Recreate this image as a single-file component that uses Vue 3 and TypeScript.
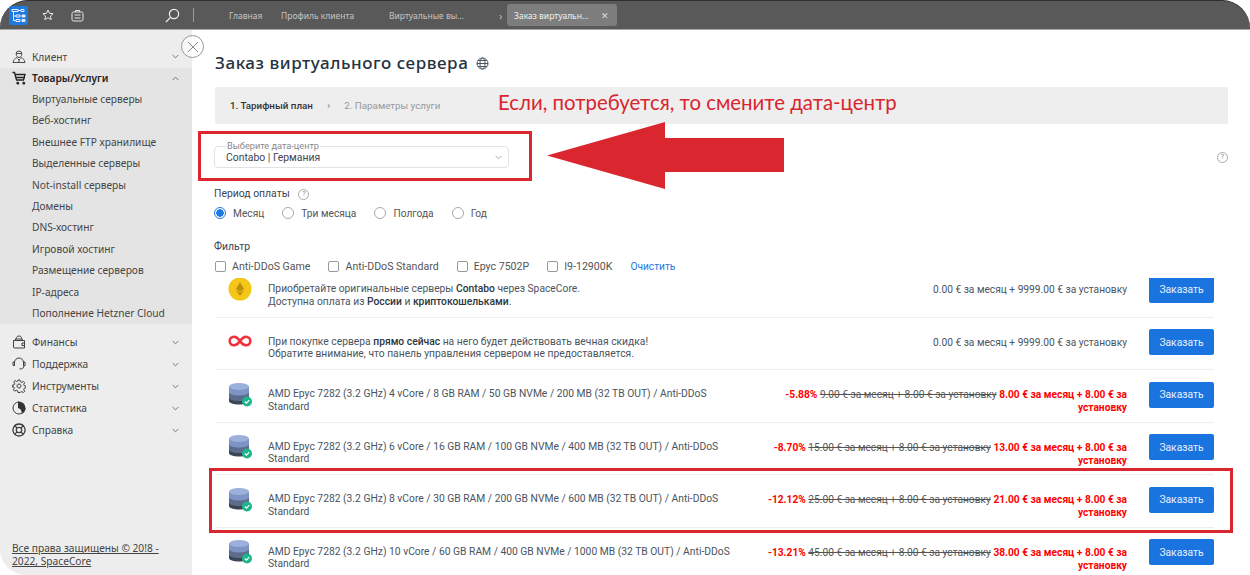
<template>
  <div class="page">
    <header class="topbar">
      <div class="logo">
        <svg width="15" height="15" viewBox="0 0 15 15" fill="none" stroke="#e6f0fd" stroke-width="1">
          <path d="M1 1.500h6v2H1zM10 1.500h3v2h-3zM7 2.500h3M2.500 3.500v9h2.500M2.500 8h2.500" />
          <path d="M5 7h4v2H5zM5 11.500h4v2H5z" />
          <path d="M11 7h3v2h-3zM11 11.500h3v2h-3z" fill="#e6f0fd" />
        </svg>
      </div>
      <svg class="top-icon star" width="12" height="12" viewBox="0 0 12 12" fill="none" stroke="#e8e8e8" stroke-width="1">
        <path d="M6 1l1.5 3.3 3.6.4-2.7 2.4.8 3.5L6 8.8l-3.2 1.8.8-3.5L.9 4.7l3.6-.4z" />
      </svg>
      <svg class="top-icon case" width="13" height="13" viewBox="0 0 13 13" fill="none" stroke="#e8e8e8" stroke-width="1">
        <rect x="1" y="3" width="11" height="9" rx="1.5" />
        <path d="M4.5 3V1.5h4V3M3.5 6h6M3.5 9h6" />
      </svg>
      <svg class="top-icon search" width="15" height="15" viewBox="0 0 15 15" fill="none" stroke="#f2f2f2" stroke-width="1.2">
        <circle cx="9" cy="6" r="4.6" />
        <path d="M5.6 9.4L1 14" />
      </svg>
      <span class="top-sep"></span>
      <nav class="tabs">
        <span class="tab-link home">Главная</span>
        <span class="tab-link client">Профиль клиента</span>
        <span class="tab-link servers">Виртуальные вы…</span>
        <span class="tab-arrow">›</span>
        <span class="tab-active">Заказ виртуальн…<span class="tab-close">✕</span></span>
      </nav>
    </header>

    <div class="body">
      <aside class="sidebar">
        <div class="menu-item" v-for="item in topMenu" :key="item.label" :class="{ open: item.open }">
          <svg class="menu-icon" width="14" height="14" viewBox="0 0 14 14" fill="none" :stroke="item.open ? '#222' : '#4a4a4a'" :stroke-width="item.open ? 1.3 : 1">
            <path :d="item.icon" />
          </svg>
          <span class="menu-label">{{ item.label }}</span>
          <svg class="chevron" :class="{ up: item.open }" width="7" height="5" viewBox="0 0 7 5" fill="none" stroke="#777" stroke-width="1">
            <path d="M.7 1l2.8 2.8L6.3 1" />
          </svg>
        </div>
        <div class="submenu">
          <div class="submenu-item" v-for="s in subMenu" :key="s">{{ s }}</div>
        </div>
        <div class="menu-rest">
          <div class="menu-item" v-for="item in bottomMenu" :key="item.label">
            <svg class="menu-icon" width="14" height="14" viewBox="0 0 14 14" fill="none" stroke="#3f3f3f" :stroke-width="item.weight ?? 1">
              <path :d="item.icon" />
              <path v-if="item.solid" :d="item.solid" fill="#333" stroke="none" />
            </svg>
            <span class="menu-label">{{ item.label }}</span>
            <svg class="chevron" width="7" height="5" viewBox="0 0 7 5" fill="none" stroke="#777" stroke-width="1">
              <path d="M.7 1l2.8 2.8L6.3 1" />
            </svg>
          </div>
        </div>
        <a class="copyright">Все права защищены © 20!8 - 2022, SpaceCore</a>
      </aside>

      <main class="content">
        <h1 class="title">
          Заказ виртуального сервера
          <svg width="13" height="13" viewBox="0 0 13 13" fill="none" stroke="#4a5560" stroke-width="1">
            <circle cx="6.500" cy="6.500" r="5.500" />
            <ellipse cx="6.500" cy="6.500" rx="2.500" ry="5.500" />
            <path d="M1 6.500h11M2 3.500h9M2 9.500h9" />
          </svg>
        </h1>

        <div class="steps">
          <span class="step-active">1. Тарифный план</span>
          <span class="step-arrow">›</span>
          <span class="step-next">2. Параметры услуги</span>
        </div>

        <div class="select-row">
          <div class="select">
            <span class="select-legend">Выберите дата-центр</span>
            <span class="select-value">Contabo | Германия</span>
            <svg width="7" height="5" viewBox="0 0 7 5" fill="none" stroke="#aaa" stroke-width="1">
              <path d="M.7 1l2.8 2.8L6.3 1" />
            </svg>
          </div>
          <span class="help help-right">?</span>
        </div>

        <div class="field-label period-label">Период оплаты <span class="help">?</span></div>
        <div class="radios">
          <label class="radio" v-for="(p, i) in periods" :key="p">
            <span class="radio-dot" :class="{ on: i === 0 }"></span>{{ p }}
          </label>
        </div>

        <div class="field-label filter-label">Фильтр</div>
        <div class="filters">
          <label class="check" v-for="f in filters" :key="f"><span class="check-box"></span>{{ f }}</label>
          <a class="clear">Очистить</a>
        </div>

        <div class="list">
          <div class="list-inner">
            <div class="row">
              <svg class="row-icon" width="24" height="24" viewBox="0 0 24 24">
                <circle cx="12" cy="12" r="11.500" fill="#f5c518" />
                <path d="M12 5l4 7-4 2.400L8 12z" fill="#b98f0a" />
                <path d="M8 13.200l4 2.400 4-2.400-4 5.600z" fill="#b98f0a" />
              </svg>
              <div class="desc">Приобретайте оригинальные серверы <b>Contabo</b> через SpaceCore.<br />Доступна оплата из <b>России</b> и <b>криптокошельками</b>.</div>
              <div class="price">0.00 € за месяц + 9999.00 € за установку</div>
              <button class="order">Заказать</button>
            </div>
            <div class="row">
              <svg class="row-icon" width="24" height="24" viewBox="0 0 24 24" fill="none" stroke="#f0313c" stroke-width="2.600">
                <path d="M12 12c-2-3-3.500-4.300-6-4.300a4.300 4.300 0 0 0 0 8.600c2.500 0 4-1.300 6-4.300s3.500-4.300 6-4.300a4.300 4.300 0 0 1 0 8.600c-2.500 0-4-1.300-6-4.300z" />
              </svg>
              <div class="desc">При покупке сервера <b>прямо сейчас</b> на него будет действовать вечная скидка!<br />Обратите внимание, что панель управления сервером не предоставляется.</div>
              <div class="price">0.00 € за месяц + 9999.00 € за установку</div>
              <button class="order">Заказать</button>
            </div>
            <div class="row" v-for="s in servers" :key="s.name">
              <svg class="row-icon" width="24" height="25" viewBox="0 0 24 25">
                <path d="M1 15v4c0 2 4.500 3.500 10 3.500S21 21 21 19v-4z" fill="#3a4656" />
                <path d="M1 9.500v6c0 2 4.500 3.500 10 3.500s10-1.500 10-3.500v-6z" fill="#5d6b8c" />
                <path d="M1 4.500v5.500c0 2 4.500 3.500 10 3.500S21 12 21 10V4.500z" fill="#7f94c4" />
                <ellipse cx="11" cy="4.500" rx="10" ry="3.500" fill="#9cb0dc" />
                <circle cx="19" cy="19.500" r="5" fill="#1fb58a" />
                <path d="M16.800 19.500l1.600 1.600 2.900-3" fill="none" stroke="#fff" stroke-width="1.100" />
              </svg>
              <div class="desc">{{ s.name }}</div>
              <div class="price">
                <span class="discount">{{ s.discount }}</span>{{ ' ' }}<s class="old">{{ s.oldPrice }} € за месяц + 8.00 € за установку</s>{{ ' ' }}<span class="discount">{{ s.newPrice }} € за месяц + 8.00 € за установку</span>
              </div>
              <button class="order">Заказать</button>
            </div>
          </div>
        </div>
      </main>
    </div>

    <!-- аннотации поверх скриншота -->
    <span class="close-round">
      <svg width="12" height="12" viewBox="0 0 12 12" fill="none" stroke="#8a8a8a" stroke-width="1"><path d="M1 1l10 10M11 1L1 11" /></svg>
    </span>
    <div class="note">Если, потребуется, то смените дата-центр</div>
    <div class="mark mark-select"></div>
    <div class="mark mark-row"></div>
    <svg class="arrow" width="240" height="68" viewBox="0 0 240 68">
      <path d="M1 33.500L119 0v16h119v34H119v17z" fill="#da262e" />
    </svg>
  </div>
</template>

<script setup lang="ts">
interface MenuItem {
  label: string
  icon: string
  open?: boolean
  solid?: string
  weight?: number
}

interface Server {
  name: string
  discount: string
  oldPrice: string
  newPrice: string
}

const topMenu: MenuItem[] = [
  { label: 'Клиент', icon: 'M7 1a2.800 2.800 0 0 1 2.800 3c0 2-1.300 3.500-2.800 3.500S4.200 6 4.200 4A2.800 2.800 0 0 1 7 1zM4.300 3.500h5.400M5 7.500C3 8.300 1.500 9.800 1 12.500h12c-.5-2.700-2-4.200-4-5M5.500 8.500L7 10l1.500-1.500M7 10v2.500' },
  { label: 'Товары/Услуги', open: true, icon: 'M.5 1.500h2l2 7.500h7l1.500-5.500H3.200M5 12.200a.8.8 0 1 0 0-.1zM11 12.200a.8.8 0 1 0 0-.1zM4 6.500h9' }
]

const subMenu: string[] = [
  'Виртуальные серверы',
  'Веб-хостинг',
  'Внешнее FTP хранилище',
  'Выделенные серверы',
  'Not-install серверы',
  'Домены',
  'DNS-хостинг',
  'Игровой хостинг',
  'Размещение серверов',
  'IP-адреса',
  'Пополнение Hetzner Cloud'
]

const bottomMenu: MenuItem[] = [
  { label: 'Финансы', icon: 'M1.500 5.500h11v7.500h-10a1 1 0 0 1-1-1zM3 5.500L4.500 2.500a2.800 2.800 0 0 1 5 0l1 3M4 4h6M12.500 8H10v2.500h2.500' },
  { label: 'Поддержка', icon: 'M2.500 8.500V5.500a4.500 4.500 0 0 1 9 0v3M1 5h1.500v3.500H1zM11.500 5H13v3.500h-1.500zM12 8.500c0 2.500-1.500 3.500-4.500 3.500' },
  { label: 'Инструменты', icon: 'M7 5a2 2 0 1 0 .01 0zM6 1h2l.3 1.700 1.600.7 1.400-1 1.400 1.400-1 1.400.6 1.600 1.700.3v1.800l-1.700.3-.6 1.500 1 1.500-1.400 1.400-1.400-1-1.600.6L8 13.500H6l-.3-1.700-1.600-.6-1.400 1-1.400-1.400 1-1.500-.6-1.500L.4 8V6.200l1.700-.3.6-1.600-1-1.400 1.400-1.400 1.400 1 1.600-.7z' },
  { label: 'Статистика', icon: 'M7 1a6 6 0 1 0 6 6', solid: 'M6 .5a6.800 6.800 0 0 1 7.500 6.500c0 3-1.500 5-4 6C10 10 9 8 6 7z' },
  { label: 'Справка', weight: 1.300, icon: 'M7 1a6 6 0 1 0 .01 0zM7 4.300a2.700 2.700 0 1 0 .01 0zM2.800 2.800l2.300 2.300M11.200 2.800L8.900 5.100M2.800 11.200l2.300-2.300M11.200 11.200L8.900 8.900' }
]

const periods: string[] = ['Месяц', 'Три месяца', 'Полгода', 'Год']
const filters: string[] = ['Anti-DDoS Game', 'Anti-DDoS Standard', 'Epyc 7502P', 'I9-12900K']

const servers: Server[] = [
  { name: 'AMD Epyc 7282 (3.2 GHz) 4 vCore / 8 GB RAM / 50 GB NVMe / 200 MB (32 TB OUT) / Anti-DDoS Standard', discount: '-5.88%', oldPrice: '9.00', newPrice: '8.00' },
  { name: 'AMD Epyc 7282 (3.2 GHz) 6 vCore / 16 GB RAM / 100 GB NVMe / 400 MB (32 TB OUT) / Anti-DDoS Standard', discount: '-8.70%', oldPrice: '15.00', newPrice: '13.00' },
  { name: 'AMD Epyc 7282 (3.2 GHz) 8 vCore / 30 GB RAM / 200 GB NVMe / 600 MB (32 TB OUT) / Anti-DDoS Standard', discount: '-12.12%', oldPrice: '25.00', newPrice: '21.00' },
  { name: 'AMD Epyc 7282 (3.2 GHz) 10 vCore / 60 GB RAM / 400 GB NVMe / 1000 MB (32 TB OUT) / Anti-DDoS Standard', discount: '-13.21%', oldPrice: '45.00', newPrice: '38.00' }
]
</script>

<style scoped>
.page {
  position: relative;
  width: 1250px;
  height: 575px;
  overflow: hidden;
  display: flex;
  flex-direction: column;
  background: #fff;
  font-family: "Noto Sans", "Open Sans", sans-serif;
}

.topbar {
  flex: none;
  height: 30px;
  box-sizing: border-box;
  border-top: 1px solid #2e2f36;
  border-bottom: 1px solid #a8a8a8;
  border-radius: 28px 28px 0 0;
  background: #595959;
  display: flex;
  align-items: center;
  padding-left: 9px;
}

.logo {
  width: 19px;
  height: 19px;
  border-radius: 2px;
  background: #1f7ae0;
  display: flex;
  align-items: center;
  justify-content: center;
}

.top-icon {
  flex: none;
}

.star {
  margin-left: 14px;
}

.case {
  margin-left: 17px;
}

.search {
  margin-left: 81px;
}

.top-sep {
  width: 1px;
  height: 14px;
  background: #9a9a9a;
  margin-left: 13px;
}

.tabs {
  display: flex;
  align-items: center;
  font-size: 8.5px;
  color: #c4c4c4;
  margin-left: 35px;
  white-space: nowrap;
}

.tab-link.home {
  width: 52px;
}

.tab-link.client {
  width: 108px;
}

.tab-link.servers {
  width: 110px;
}

.tab-arrow {
  width: 8px;
  font-size: 11px;
  color: #bcbcbc;
}

.tab-active {
  height: 22px;
  width: 110px;
  box-sizing: border-box;
  border-radius: 3px;
  background: #7d7d7d;
  color: #f0f0f0;
  padding-left: 7px;
  display: flex;
  align-items: center;
  justify-content: space-between;
  padding-right: 8px;
}

.tab-close {
  font-size: 9px;
  color: #ddd;
}

.body {
  flex: 1;
  display: flex;
  min-height: 0;
}

.sidebar {
  flex: none;
  width: 192px;
  box-sizing: border-box;
  padding-top: 16px;
  background: #ededed;
  border-bottom-left-radius: 26px;
  display: flex;
  flex-direction: column;
  font-size: 10.2px;
  color: #444;
}

.menu-item {
  height: 21.5px;
  display: flex;
  align-items: center;
  padding: 0 13px 0 12px;
}

.menu-rest .menu-item {
  height: 22px;
}

.menu-item.open {
  background: #e4e4e4;
  color: #222;
  font-weight: 600;
}

.menu-icon {
  flex: none;
}

.menu-label {
  margin-left: 6px;
  flex: 1;
}

.chevron.up {
  transform: rotate(180deg);
}

.submenu {
  background: #e4e4e4;
  padding: 0 0 0 32px;
  margin-bottom: 7px;
}

.submenu-item {
  height: 21.4px;
  line-height: 21.4px;
}

.menu-rest {
  flex: 1;
}

.copyright {
  margin: 0 30px 7px 12px;
  font-size: 10.2px;
  line-height: 13px;
  text-decoration: underline;
  color: #444;
}

.content {
  flex: 1;
  min-width: 0;
  padding-left: 23px;
  display: flex;
  flex-direction: column;
  color: #3b4450;
  font-family: Roboto, "Noto Sans", sans-serif;
  font-size: 10.2px;
}

.title {
  margin: 22px 0 0;
  height: 22px;
  line-height: 22px;
  font-family: "Noto Sans", sans-serif;
  font-size: 17px;
  font-weight: 500;
  letter-spacing: .55px;
  color: #26323f;
  display: flex;
  align-items: center;
  gap: 8px;
}

.steps {
  margin: 13px 22px 0 0;
  height: 37px;
  border-radius: 2px;
  background: #eee;
  display: flex;
  align-items: center;
  padding-left: 15px;
  font-size: 9.8px;
}

.step-active {
  font-weight: 500;
  color: #333;
}

.step-arrow {
  margin: 0 14px;
  color: #888;
  font-size: 11px;
}

.step-next {
  color: #999;
}

.select-row {
  margin: 22px 22px 0 0;
  display: flex;
  align-items: center;
  justify-content: space-between;
}

.select {
  position: relative;
  width: 295px;
  height: 22px;
  margin-left: -1px;
  box-sizing: border-box;
  border: 1px solid #e2e2e2;
  border-radius: 4px;
  display: flex;
  align-items: center;
  justify-content: space-between;
  padding: 0 6px 0 11px;
  font-size: 10.4px;
}

.select-legend {
  position: absolute;
  left: 11px;
  top: -6px;
  padding: 0 1px;
  background: #fff;
  font-size: 9.200px;
  line-height: 10px;
  color: #888;
}

.help {
  display: inline-block;
  width: 9px;
  height: 9px;
  border: 1px solid #aaa;
  border-radius: 50%;
  font-size: 7px;
  line-height: 9px;
  text-align: center;
  color: #888;
  vertical-align: 1px;
  margin-left: 6px;
}

.field-label {
  height: 15px;
  line-height: 15px;
  font-size: 10.4px;
}

.period-label {
  margin-top: 18px;
  margin-left: -1px;
}

.radios {
  margin-top: 5px;
  margin-left: -1px;
  height: 14px;
  display: flex;
  align-items: center;
  gap: 18px;
}

.radio {
  display: flex;
  align-items: center;
  gap: 7px;
  color: #555;
}

.radio-dot {
  width: 12px;
  height: 12px;
  box-sizing: border-box;
  border: 1px solid #aaa;
  border-radius: 50%;
}

.radio-dot.on {
  border-color: #1d78e2;
  background: radial-gradient(circle, #1d78e2 0 3.500px, #fff 4px);
}

.filter-label {
  margin-top: 19px;
  margin-left: -1px;
}

.filters {
  margin-top: 4px;
  height: 16px;
  display: flex;
  align-items: center;
  gap: 18px;
  flex: none;
  font-size: 10.600px;
}

.check {
  display: flex;
  align-items: center;
  gap: 6px;
  color: #555;
}

.check-box {
  width: 11px;
  height: 11px;
  box-sizing: border-box;
  border: 1px solid #999;
  border-radius: 2px;
}

.clear {
  color: #1d78e2;
  font-size: 10.200px;
}

.list {
  flex: 1;
  min-height: 0;
  overflow: hidden;
  margin-top: 4px;
  margin-right: 36px;
}

.list-inner {
  margin-top: -13px;
}

.row {
  height: 52.500px;
  box-sizing: border-box;
  border-bottom: 1.500px solid #eee;
  display: flex;
  align-items: flex-start;
  padding-left: 13px;
}

.row-icon {
  flex: none;
  margin-top: 11.500px;
}

.desc {
  width: 465px;
  flex: none;
  margin-left: 16px;
  padding-top: 18px;
  line-height: 12.500px;
  font-size: 10.300px;
  color: #4a5460;
}

.desc b {
  font-weight: 500;
  color: #2d3641;
}

.price {
  flex: 1;
  margin-left: 6px;
  margin-right: 22px;
  padding-top: 18px;
  text-align: right;
  line-height: 13px;
  color: #4a5460;
}

.discount {
  color: #f00;
  font-weight: 700;
}

.old {
  color: #555;
}

.order {
  flex: none;
  width: 65px;
  height: 26px;
  margin-top: 11.500px;
  padding: 0;
  border: 0;
  border-radius: 2px;
  background: #1a74e0;
  color: #e8f1fc;
  font: inherit;
  font-size: 10.300px;
}

.close-round {
  position: absolute;
  left: 181px;
  top: 35px;
  width: 21px;
  height: 21px;
  border: 1px solid #999;
  border-radius: 50%;
  background: rgba(255, 255, 255, .55);
  display: flex;
  align-items: center;
  justify-content: center;
}

.note {
  position: absolute;
  left: 498px;
  top: 89px;
  font-family: Lato, "Open Sans", sans-serif;
  font-size: 20.400px;
  line-height: 26px;
  color: #d9252e;
  white-space: nowrap;
}

.mark {
  position: absolute;
  box-sizing: border-box;
  border: 3px solid #da262e;
}

.mark-select {
  left: 198px;
  top: 131px;
  width: 334px;
  height: 50px;
}

.mark-row {
  left: 209px;
  top: 468px;
  width: 1024px;
  height: 65px;
}

.arrow {
  position: absolute;
  left: 546px;
  top: 122px;
}
</style>

<style>
html,
body {
  background: #fff;
}
</style>
